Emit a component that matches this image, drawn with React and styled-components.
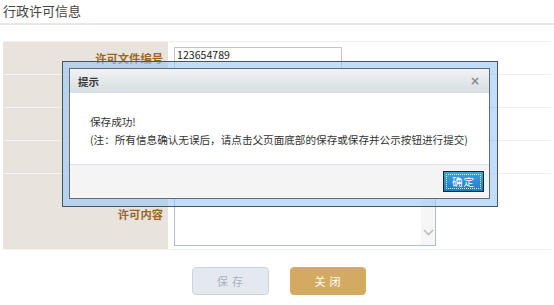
import React from "react";
import styled, { createGlobalStyle } from "styled-components";

const GlobalStyle = createGlobalStyle`
  html, body {
    margin: 0;
    padding: 0;
    background: #fff;
    font-family: "Noto Sans CJK SC", "Noto Sans", sans-serif;
    color: #333;
  }
`;

const Page = styled.div`
  position: relative;
  width: 554px;
  height: 305px;
  overflow: hidden;
`;

const Heading = styled.div`
  height: 23px;
  padding-left: 3px;
  font-size: 13px;
  line-height: 22px;
  color: #444;
  border-bottom: 2px solid #e8e8e8;
`;

const Table = styled.div`
  margin: 16px 3px 0 3px;
  display: grid;
  grid-template-columns: 167px 1fr;
  border-top: 1px solid #f0f0f0;
`;

const Label = styled.div`
  height: ${(p) => p.$h}px;
  box-sizing: border-box;
  background: #e9e3dd;
  border-bottom: 1px solid #f6f3f0;
  border-right: 2px solid #fff;
  display: flex;
  align-items: ${(p) => (p.$top ? "flex-start" : "center")};
  justify-content: flex-end;
  padding: ${(p) => (p.$top ? "32px 5px 0 0" : "0 5px 0 0")};
  font-size: 11.3px;
  font-weight: bold;
  color: #9a6824;
`;

const Cell = styled.div`
  height: ${(p) => p.$h}px;
  box-sizing: border-box;
  border-bottom: 1px solid #eeeeee;
  padding: ${(p) => (p.$top ? "7px 0 0 4px" : "0 0 0 4px")};
  display: flex;
  align-items: ${(p) => (p.$top ? "flex-start" : "center")};
`;

const TextInput = styled.div`
  width: 168px;
  height: 22px;
  box-sizing: border-box;
  border: 1px solid #c4c4c4;
  padding-left: 2px;
  font-size: 10.6px;
  line-height: 14px;
  color: #222;
`;

const TextArea = styled.div`
  width: 262px;
  height: 65px;
  box-sizing: border-box;
  border: 1px solid #a9bfd6;
  display: flex;
  justify-content: flex-end;
`;

const ScrollStrip = styled.div`
  width: 14px;
  background: #f6f6f6;
  display: flex;
  flex-direction: column;
  justify-content: space-between;
  align-items: center;
  padding: 3px 0 9px;
`;

const Buttons = styled.div`
  display: flex;
  justify-content: center;
  gap: 21px;
  margin-top: 17px;
  padding-left: 3px;
`;

const Button = styled.div`
  width: ${(p) => p.$w}px;
  height: 28px;
  box-sizing: border-box;
  border-radius: 4px;
  display: flex;
  align-items: center;
  justify-content: center;
  font-size: 11px;
  letter-spacing: 4px;
  text-indent: 4px;
  background: ${(p) => (p.$disabled ? "#e4e9ef" : "#d4aa63")};
  border: 1px solid ${(p) => (p.$disabled ? "#ccd5df" : "#d4aa63")};
  color: ${(p) => (p.$disabled ? "#a8b2be" : "#fff")};
`;

const Frame = styled.div`
  position: absolute;
  left: 62px;
  top: 61px;
  width: 436px;
  height: 146px;
  box-sizing: border-box;
  border: 1px solid #4c535c;
  background: rgba(150, 200, 245, 0.6);
  padding: 6px 7px 7px 6px;
  display: flex;
`;

const Dialog = styled.div`
  flex: 1;
  border: 1px solid #646a72;
  background: #fff;
  display: flex;
  flex-direction: column;
`;

const DialogHeader = styled.div`
  height: 24px;
  background: linear-gradient(#f0f3f5, #d7dde1);
  display: flex;
  align-items: center;
  justify-content: space-between;
  padding: 0 9px 0 8px;
  font-size: 10.5px;
  font-weight: bold;
  color: #3a3a3a;
`;

const Close = styled.span`
  font-size: 12px;
  font-weight: bold;
  color: #8a8a8a;
  font-family: "DejaVu Sans", sans-serif;
`;

const DialogBody = styled.div`
  flex: 1;
  padding: 22px 0 0 20px;
  display: flex;
  flex-direction: column;
  gap: 4px;
  font-size: 10.6px;
  line-height: 14px;
  color: #333;
`;

const DialogFooter = styled.div`
  height: 34px;
  box-sizing: border-box;
  background: #f4f4f4;
  border-top: 1px solid #dde4ec;
  display: flex;
  justify-content: flex-end;
  align-items: center;
  padding-right: 5px;
`;

const OkButton = styled.div`
  width: 41px;
  height: 21px;
  box-sizing: border-box;
  border: 1px solid #13283d;
  background: linear-gradient(#3da3e2, #1b7cc6);
  padding: 2px;
  display: flex;
`;

const OkInner = styled.div`
  flex: 1;
  border: 1px dotted #d8ecfa;
  display: flex;
  align-items: center;
  justify-content: center;
  font-size: 10.6px;
  color: #fff;
  letter-spacing: 1px;
`;

const Chevron = ({ up }) => (
  <svg width="11" height="7" viewBox="0 0 11 7">
    <path
      d={up ? "M1 6 L5.5 1.5 L10 6" : "M1 1 L5.5 5.5 L10 1"}
      fill="none"
      stroke="#bdbdbd"
      strokeWidth="1.6"
    />
  </svg>
);

// rows 2-4 sit entirely under the dialog, so their labels stay blank
const rows = [
  { id: 1, label: "许可文件编号", value: "123654789" },
  { id: 2, label: "", value: "" },
  { id: 3, label: "", value: "" },
  { id: 4, label: "", value: "" },
];

export default function App() {
  return (
    <Page>
      <GlobalStyle />
      <Heading>行政许可信息</Heading>
      <Table>
        {rows.map((r) => (
          <React.Fragment key={r.id}>
            <Label $h={33}>{r.label}</Label>
            <Cell $h={33}>
              <TextInput>{r.value}</TextInput>
            </Cell>
          </React.Fragment>
        ))}
        <Label $h={76} $top>许可内容</Label>
        <Cell $h={76} $top>
          <TextArea>
            <ScrollStrip>
              <Chevron up />
              <Chevron />
            </ScrollStrip>
          </TextArea>
        </Cell>
      </Table>
      <Buttons>
        <Button $w={77} $disabled>保存</Button>
        <Button $w={76}>关闭</Button>
      </Buttons>

      <Frame>
        <Dialog>
          <DialogHeader>
            <span>提示</span>
            <Close>×</Close>
          </DialogHeader>
          <DialogBody>
            <div>保存成功!</div>
            <div>(注：所有信息确认无误后，请点击父页面底部的保存或保存并公示按钮进行提交)</div>
          </DialogBody>
          <DialogFooter>
            <OkButton>
              <OkInner>确定</OkInner>
            </OkButton>
          </DialogFooter>
        </Dialog>
      </Frame>
    </Page>
  );
}
